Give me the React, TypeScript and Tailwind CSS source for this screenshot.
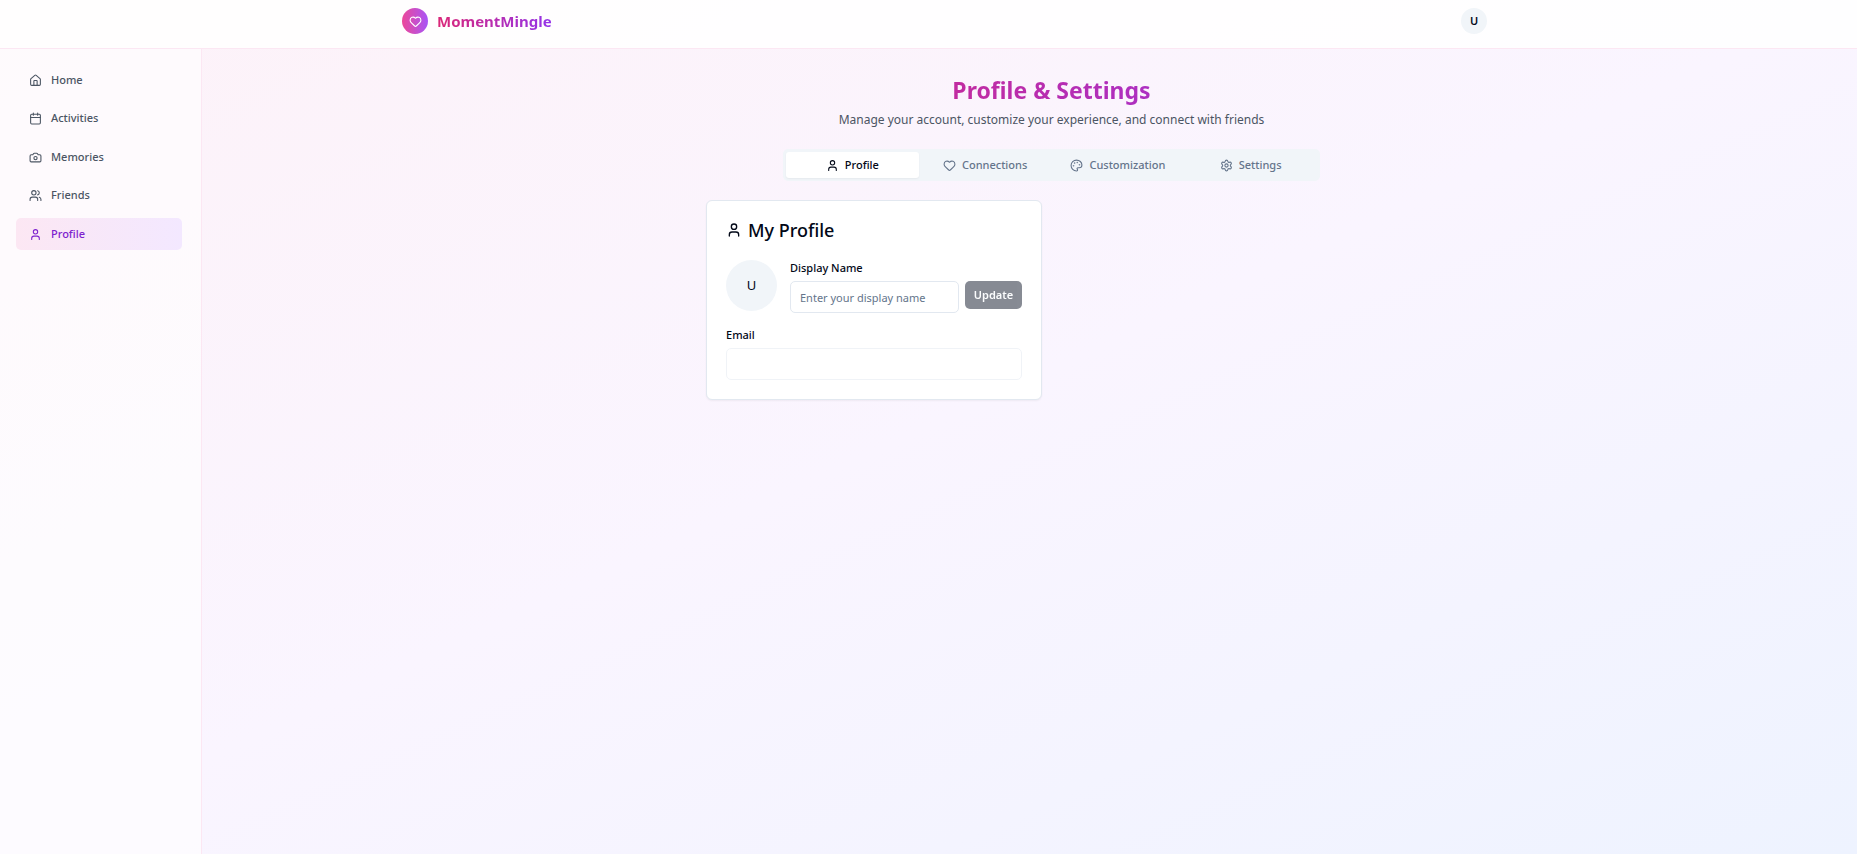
import { useState } from "react";
import type { LucideIcon } from "lucide-react";
import { Calendar, Camera, Heart, House, Palette, Settings, User, Users } from "lucide-react";

const navItems: { label: string; icon: LucideIcon }[] = [
  { label: "Home", icon: House },
  { label: "Activities", icon: Calendar },
  { label: "Memories", icon: Camera },
  { label: "Friends", icon: Users },
  { label: "Profile", icon: User },
];

const tabs: { label: string; icon: LucideIcon }[] = [
  { label: "Profile", icon: User },
  { label: "Connections", icon: Heart },
  { label: "Customization", icon: Palette },
  { label: "Settings", icon: Settings },
];

function Header() {
  return (
    <header className="border-b border-[#fce7f3] bg-white/90">
      <div className="pl-8">
        <div className="mx-auto flex h-12 max-w-[1085px] items-start justify-between pt-2">
          <a href="#home" className="flex items-center gap-[9px]">
            <span className="flex size-[26px] items-center justify-center rounded-full bg-linear-to-r/srgb from-[#ec4899] to-[#a855f7]">
              <Heart className="size-[13px] text-white" />
            </span>
            <span className="bg-linear-to-r/srgb from-[#db2777] to-[#9333ea] bg-clip-text text-[15px] leading-6 font-bold text-transparent">
              MomentMingle
            </span>
          </a>
          <button
            type="button"
            aria-label="Account"
            className="flex size-[26px] items-center justify-center rounded-full bg-[#f1f5f9] text-[11px] font-semibold text-[#020817]"
          >
            U
          </button>
        </div>
      </div>
    </header>
  );
}

function Sidebar() {
  return (
    <aside className="w-[202px] shrink-0 border-r border-[#fce7f3] bg-white/60 px-4 py-[15px] pr-[19px]">
      <nav className="flex h-[186px] flex-col justify-between">
        {navItems.map(({ label, icon: Icon }) => (
          <a
            key={label}
            href={"#" + label.toLowerCase()}
            className={
              label === "Profile"
                ? "flex h-8 items-center gap-[9px] rounded-[5px] bg-linear-to-r/srgb from-[#fce7f3] to-[#f3e8ff] px-[13px] text-[11px] font-medium text-[#7e22ce]"
                : "flex h-8 items-center gap-[9px] rounded-[5px] px-[13px] text-[11px] font-medium text-[#4b5563]"
            }
          >
            <Icon className="size-[13px]" />
            {label}
          </a>
        ))}
      </nav>
    </aside>
  );
}

function ProfileCard() {
  const [name, setName] = useState("");
  return (
    <section className="rounded-md border border-[#e2e8f0] bg-white p-[19px] text-[#020817] shadow-xs">
      <h2 className="flex h-5 items-center gap-[6px] text-[18px] font-medium">
        <User className="size-4" />
        My Profile
      </h2>
      <div className="mt-[18px] flex items-center gap-[13px]">
        <div className="flex size-[51px] shrink-0 items-center justify-center rounded-full bg-[#f1f5f9] text-[13px]">
          U
        </div>
        <div className="min-w-0 flex-1">
          <label htmlFor="display-name" className="block text-[11px] leading-5 font-medium">
            Display Name
          </label>
          <div className="mt-[3px] flex items-start gap-[6px]">
            <input
              id="display-name"
              type="text"
              value={name}
              onChange={(e) => setName(e.target.value)}
              placeholder="Enter your display name"
              className="h-8 min-w-0 flex-1 rounded-[5px] border border-[#e2e8f0] bg-white px-[9px] text-[11px] placeholder:text-[#64748b]"
            />
            <button
              type="button"
              disabled={name === ""}
              className="h-7 w-[57px] rounded-[5px] bg-[#0f172a] text-[11px] font-semibold text-[#f8fafc] disabled:opacity-50"
            >
              Update
            </button>
          </div>
        </div>
      </div>
      <div className="mt-3">
        <label htmlFor="email" className="block text-[11px] leading-5 font-medium">
          Email
        </label>
        <input
          id="email"
          type="email"
          disabled
          className="mt-[3px] block h-8 w-full rounded-[5px] border border-[#e2e8f0] bg-white px-[9px] text-[11px] opacity-50"
        />
      </div>
    </section>
  );
}

export default function App() {
  const [active, setActive] = useState("Profile");
  return (
    <div className="flex min-h-screen flex-col bg-linear-to-br/srgb from-[#fdf2f8] via-[#faf5ff] to-[#eef3ff] font-['Noto_Sans',sans-serif]">
      <Header />
      <div className="flex flex-1">
        <Sidebar />
        <main className="min-w-0 flex-1 pt-[25px] pl-11">
          <div className="mx-auto max-w-[691px]">
            <div className="text-center">
              <h1 className="bg-linear-to-r/srgb from-[#db2777] to-[#9333ea] bg-clip-text text-[23px] leading-8 font-bold text-transparent">
                Profile &amp; Settings
              </h1>
              <p className="mt-1 text-[12px] leading-5 text-[#4b5563]">
                Manage your account, customize your experience, and connect with friends
              </p>
            </div>
            <div
              role="tablist"
              className="mx-auto mt-[19px] grid h-8 max-w-[537px] grid-cols-4 rounded-[5px] bg-[#f1f5f9] p-[3px]"
            >
              {tabs.map(({ label, icon: Icon }) => (
                <button
                  key={label}
                  type="button"
                  role="tab"
                  aria-selected={active === label}
                  onClick={() => setActive(label)}
                  className="flex items-center justify-center gap-[6px] rounded-[3px] text-[11px] font-medium text-[#64748b] aria-selected:bg-white aria-selected:text-[#020817] aria-selected:shadow-xs"
                >
                  <Icon className="size-[13px]" />
                  {label}
                </button>
              ))}
            </div>
            <div className="mt-[19px] grid grid-cols-2 gap-[19px]">
              <ProfileCard />
            </div>
          </div>
        </main>
      </div>
    </div>
  );
}
